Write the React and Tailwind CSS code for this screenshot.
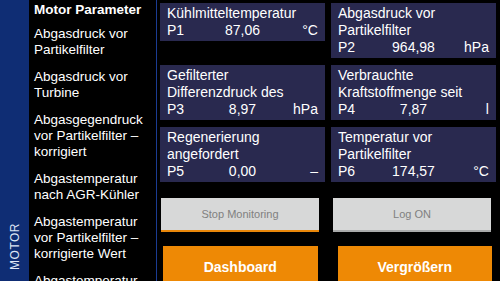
import React from 'react';

const params = [
    { lines: ['Abgasdruck vor', 'Partikelfilter'] },
    { lines: ['Abgasdruck vor', 'Turbine'] },
    { lines: ['Abgasgegendruck', 'vor Partikelfilter –', 'korrigiert'] },
    { lines: ['Abgastemperatur', 'nach AGR-Kühler'] },
    { lines: ['Abgastemperatur', 'vor Partikelfilter –', 'korrigierte Wert'] },
    { lines: ['Abgastemperatur', 'nach Turbine'] },
];

const rows = [
    [
        { title: ['Kühlmitteltemperatur'], id: 'P1', value: '87,06', unit: '°C' },
        { title: ['Abgasdruck vor', 'Partikelfilter'], id: 'P2', value: '964,98', unit: 'hPa' },
    ],
    [
        { title: ['Gefilterter', 'Differenzdruck des'], id: 'P3', value: '8,97', unit: 'hPa' },
        { title: ['Verbrauchte', 'Kraftstoffmenge seit'], id: 'P4', value: '7,87', unit: 'l' },
    ],
    [
        { title: ['Regenerierung', 'angefordert'], id: 'P5', value: '0,00', unit: '–' },
        { title: ['Temperatur vor', 'Partikelfilter'], id: 'P6', value: '174,57', unit: '°C' },
    ],
];

const Card = ({ card }) => (
    <div className="bg-[#29294f] px-[7px] py-[2px] text-[14px] leading-[17px] text-white">
        {card.title.map((t) => (
            <div key={t} className="whitespace-nowrap">{t}</div>
        ))}
        <div className="grid grid-cols-3">
            <span>{card.id}</span>
            <span className="text-center">{card.value}</span>
            <span className="text-right">{card.unit}</span>
        </div>
    </div>
);

export default function App() {
    return (
        <div className="w-[500px] h-[281px] bg-black flex overflow-hidden font-['Liberation_Sans',Arial,sans-serif] text-white">
            {/* side tab */}
            <div className="w-[29px] shrink-0 bg-[#0f2d74] flex items-end justify-center pb-[11px]">
                <span className="[writing-mode:vertical-rl] rotate-180 text-[12px] tracking-[0.5px] text-[#dfe6f5]">MOTOR</span>
            </div>

            {/* parameter list */}
            <div className="w-[127px] shrink-0 pl-[5px] pt-[2px] text-[13.5px] leading-[16px] overflow-hidden">
                <div className="font-bold pb-[8px]">Motor Parameter</div>
                <div className="flex flex-col gap-[11px]">
                    {params.map((p, i) => (
                        <div key={i}>
                            {p.lines.map((l) => (
                                <div key={l} className="whitespace-nowrap">{l}</div>
                            ))}
                        </div>
                    ))}
                </div>
            </div>

            <div className="w-px shrink-0 bg-[#1b3c92]" />

            {/* values */}
            <div className="flex-1 flex flex-col">
                <div className="flex flex-col gap-[7px] pt-[3px] pl-[3px] pr-[4px]">
                    {rows.map((row, i) => (
                        <div key={i} className="grid grid-cols-2 gap-x-[6px] items-start">
                            {row.map((c) => (
                                <Card key={c.id} card={c} />
                            ))}
                        </div>
                    ))}
                </div>

                <div className="h-px bg-[#1b3c92] mt-[6px]" />

                <div className="grid grid-cols-2 gap-x-[14px] pl-[4px] pr-[9px] mt-[10px]">
                    <button className="h-[34px] bg-[#d7d8d8] border-b-2 border-[#e8870a] text-[11px] text-[#808080]">
                        Stop Monitoring
                    </button>
                    <button className="h-[34px] bg-[#d7d8d8] border-b-2 border-[#a9aaaa] text-[11px] text-[#808080]">
                        Log ON
                    </button>
                </div>

                <div className="grid grid-cols-2 gap-x-[20px] pl-[6px] pr-[8px] mt-[14px]">
                    <button className="h-[42px] bg-[#ee8905] text-[14px] font-bold text-white">
                        Dashboard
                    </button>
                    <button className="h-[42px] bg-[#ee8905] text-[14px] font-bold text-white">
                        Vergrößern
                    </button>
                </div>
            </div>
        </div>
    );
}
